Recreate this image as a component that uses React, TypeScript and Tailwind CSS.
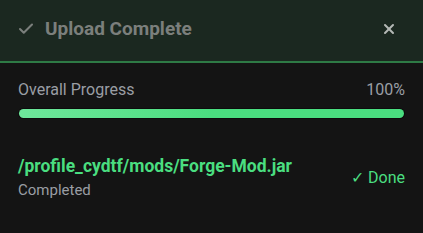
import React from 'react';
import { Check, X } from 'lucide-react';

export default function App() {
  return (
    <div
      className="w-[423px] h-[233px] bg-[#141414] overflow-hidden"
      style={{ fontFamily: 'Roboto, "Liberation Sans", sans-serif' }}
    >
      <div className="h-[63px] bg-[#1b2820] border-b-2 border-[#2e7a45] flex items-center pb-[4px] pl-[17px] pr-[26px]">
        <Check size={18} strokeWidth={2.75} className="text-[#7b7f7c]" />
        <span className="ml-[10px] text-[19px] font-bold text-[#7b7f7c] leading-none">Upload Complete</span>
        <div className="flex-1" />
        <X size={16} strokeWidth={3} className="text-[#b4b8b5]" />
      </div>
      <div className="px-[18px] pt-[17px]">
        <div className="flex items-center justify-between text-[16px] text-[#9a9ea4] leading-5">
          <span>Overall Progress</span>
          <span>100%</span>
        </div>
        <div className="mt-[8px] h-[11px] rounded-full bg-[#0c0c0c] p-[1px]">
          <div className="h-full w-full rounded-full bg-gradient-to-r from-[#6ee79b] via-[#4ade80] to-[#4ade80]" />
        </div>
        <div className="mt-[36px] flex items-center justify-between">
          <div className="flex flex-col">
            <span className="text-[17.5px] font-bold text-[#4ade80] leading-[22px]">/profile_cydtf/mods/Forge-Mod.jar</span>
            <span className="mt-[3px] text-[15px] text-[#9a9ea4] leading-5">Completed</span>
          </div>
          <span className="text-[16px] text-[#4ade80] leading-5">✓ Done</span>
        </div>
      </div>
    </div>
  );
}
